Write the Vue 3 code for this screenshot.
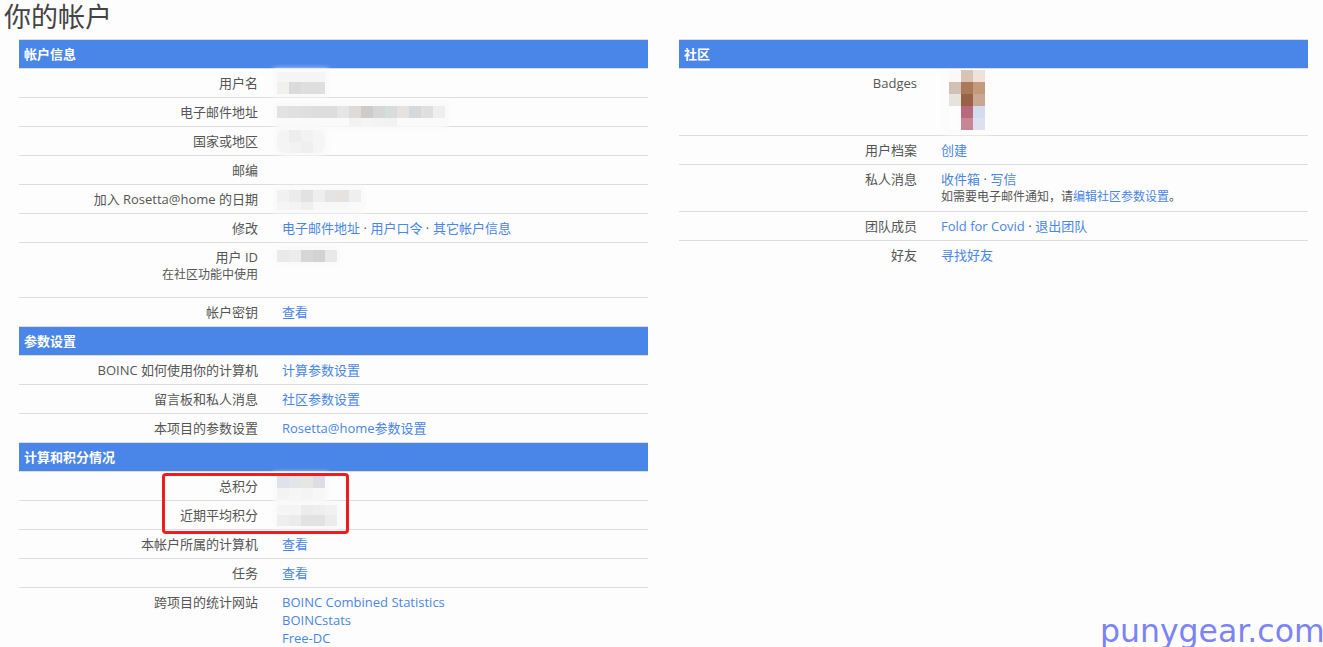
<script setup>
const left = [
  { title: '帐户信息', rows: [
    { label: '用户名', mosaic: { top: 3, rows: [[10, '#f5f5f5,#f5f5f5,#f5f5f5,#f5f5f5'], [12, '#f0f0ef,#dcdbdb,#dedede,#dedede']] } },
    { label: '电子邮件地址', mosaic: { top: 8, rows: [[12, '#e3e1e1,#e1e0e0,#dfdfdf,#dddddd,#dddddd,#e5e5e5,#dcdbd9,#cdccca,#d5d6d6,#d9dcdc,#e6e2e1,#d7d8dc,#dfdfdf,#eeeeee'], [8, '#fafafa,#fafafa,#fafafa,#fafafa,#fafafa,#fafafa,#f2f2f2,#f5f5f5,#f3f3f3,#f2f2f2,#fafafa,#fafafa,#fafafa,#fafafa']] } },
    { label: '国家或地区', mosaic: { top: 3, radius: 8, rows: [[12, '#f4f4f4,#ededed,#f2f2f2,#f5f5f5'], [11, '#f4f4f4,#f2f2f2,#efefef,#f5f5f5']] } },
    { label: '邮编' },
    { label: '加入 Rosetta@home 的日期', mosaic: { top: 5, rows: [[12, '#f1f1f1,#ebebeb,#e2e2e0,#eeeeee,#e5e4e2,#e6e2df,#eeeff1'], [8, '#f5f5f5,#f3f3f3,#efefef,#f8f8f8,#f8f8f8,#f8f8f8,#fafafa']] } },
    { label: '修改', links: [['电子邮件地址', '用户口令', '其它帐户信息']] },
    { label: '用户 ID', sub: '在社区功能中使用', tall: true, mosaic: { top: 7, rows: [[12, '#e9e9e9,#ececec,#d6d6d6,#d2d2d2,#e8e8ea']] } },
    { label: '帐户密钥', links: [['查看']] },
  ] },
  { title: '参数设置', rows: [
    { label: 'BOINC 如何使用你的计算机', links: [['计算参数设置']] },
    { label: '留言板和私人消息', links: [['社区参数设置']] },
    { label: '本项目的参数设置', links: [['Rosetta@home参数设置']] },
  ] },
  { title: '计算和积分情况', rows: [
    { label: '总积分', mosaic: { top: 4, rows: [[12, '#dfe2e8,#e3e5e8,#e6e6e2,#dcdee3'], [12, '#f3f3f3,#f6f6f6,#f4f4f4,#f7f7f7']] } },
    { label: '近期平均积分', mosaic: { top: 4, rows: [[10, '#f5f5f5,#f5f5f5,#ececec,#eeeeee,#f1f1f1'], [11, '#eeeeee,#ebebeb,#e2e2e2,#e2e2e2,#ececec']] } },
    { label: '本帐户所属的计算机', links: [['查看']] },
    { label: '任务', links: [['查看']] },
    { label: '跨项目的统计网站', links: [['BOINC Combined Statistics'], ['BOINCstats'], ['Free-DC']], last: true },
  ] },
]
const badgeRows = [
  ['#fbf9f8', '#d9c3b4', '#ede3db'],
  ['#d2c0b4', '#a87a56', '#c39a7a'],
  ['#e8e2dd', '#976344', '#c9a790'],
  ['transparent', '#b8697e', '#d3dcef'],
  ['transparent', '#c98595', '#dde1ef'],
]
const cells = (s) => s.split(',')
</script>

<template>
  <div class="page">
    <h2 class="title">你的帐户</h2>
    <div class="columns">
      <div class="col col-left">
        <template v-for="sec in left" :key="sec.title">
          <div class="head">{{ sec.title }}</div>
          <div v-for="r in sec.rows" :key="r.label" class="row" :class="{ tall: r.tall, last: r.last }">
            <div class="label">
              {{ r.label }}
              <div v-if="r.sub" class="sub">{{ r.sub }}</div>
            </div>
            <div class="value">
              <div v-for="(line, i) in r.links" :key="i" class="links">
                <template v-for="(a, j) in line" :key="a">
                  <span v-if="j" class="dot"> · </span><a href="#">{{ a }}</a>
                </template>
              </div>
              <div v-if="r.mosaic" class="mosaic" :style="{ top: r.mosaic.top + 'px', borderRadius: (r.mosaic.radius || 0) + 'px' }">
                <div v-for="(m, i) in r.mosaic.rows" :key="i" class="mrow" :style="{ height: m[0] + 'px' }">
                  <span v-for="(c, k) in cells(m[1])" :key="k" class="cell" :style="{ background: c }"></span>
                </div>
              </div>
            </div>
          </div>
        </template>
        <div class="redbox"></div>
      </div>

      <div class="col col-right">
        <div class="head">社区</div>
        <div class="row badges">
          <div class="label">Badges</div>
          <div class="value">
            <div class="badge-art">
              <div v-for="(br, i) in badgeRows" :key="i" class="brow">
                <span v-for="(c, k) in br" :key="k" class="bcell" :style="{ background: c }"></span>
              </div>
            </div>
          </div>
        </div>
        <div class="row">
          <div class="label">用户档案</div>
          <div class="value"><a href="#">创建</a></div>
        </div>
        <div class="row">
          <div class="label">私人消息</div>
          <div class="value">
            <a href="#">收件箱</a><span class="dot"> · </span><a href="#">写信</a>
            <div class="note">如需要电子邮件通知，请<a href="#">编辑社区参数设置</a>。</div>
          </div>
        </div>
        <div class="row">
          <div class="label">团队成员</div>
          <div class="value"><a href="#">Fold for Covid</a><span class="dot"> · </span><a href="#">退出团队</a></div>
        </div>
        <div class="row last">
          <div class="label">好友</div>
          <div class="value"><a href="#">寻找好友</a></div>
        </div>
      </div>
    </div>
    <div class="watermark">punygear.com</div>
  </div>
</template>

<style>
html, body { margin: 0; height: 647px; overflow: hidden; background: #fdfdfd; }
</style>

<style scoped>
.page {
  position: relative;
  height: 647px;
  overflow: hidden;
  background: #fdfdfd;
  color: #555;
  font: 13px/18px "Open Sans", "Noto Sans CJK SC", sans-serif;
}
.title {
  margin: 0;
  height: 39px;
  padding-left: 4px;
  box-sizing: border-box;
  font-size: 27px;
  font-weight: 400;
  line-height: 34px;
  color: #444;
}
.columns { display: flex; gap: 31px; padding-left: 19px; }
.col { position: relative; width: 629px; border-top: 1px solid #ddd; }
.head {
  height: 28px;
  padding-left: 5px;
  background: #4a86e8;
  border-bottom: 1px solid #ddd;
  color: #fff;
  font-weight: 700;
  line-height: 28px;
}
.row {
  display: grid;
  grid-template-columns: 253px 1fr;
  border-bottom: 1px solid #ddd;
}
.col-right .row { grid-template-columns: 257px 1fr; }
.row.last { border-bottom: 0; }
.row.tall { height: 54px; }
.row.badges { height: 66px; }
.label {
  padding: 5px 14px 5px 5px;
  text-align: right;
}
.col-right .label { padding-right: 19px; }
.sub { font-size: 12px; line-height: 18px; }
.value { position: relative; padding: 5px; min-height: 18px; }
.col-left .links { padding-left: 5px; }
.note { font-size: 12px; }
.dot { color: #555; padding-right: 0.25px; }
a { color: #4a86e8; text-decoration: none; }
.mosaic {
  position: absolute;
  left: 5px;
  box-shadow: 0 0 5px 3px #f9f9f9;
  overflow: hidden;
}
.mrow { display: flex; }
.cell { width: 12px; height: 100%; }
.badge-art {
  position: absolute;
  left: 13px;
  top: 1px;
  box-shadow: 0 0 6px 4px #fbfbfb;
  clip-path: inset(0 -12px -12px -12px);
}
.brow { display: flex; }
.bcell { width: 12px; height: 12px; }
.redbox {
  position: absolute;
  left: 143px;
  top: 433px;
  width: 181px;
  height: 55px;
  border: 3px solid #f01c1c;
  border-radius: 4px;
}
.watermark {
  position: absolute;
  left: 1100px;
  top: 609px;
  font: 31.5px/44px "DejaVu Sans", sans-serif;
  color: #7b83f8;
  white-space: nowrap;
}
</style>
